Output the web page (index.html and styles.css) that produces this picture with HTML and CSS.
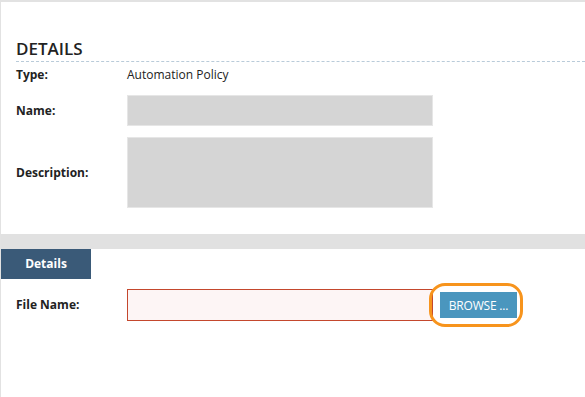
FILE: index.html
```html
<!DOCTYPE html>
<html lang="en">
<head>
    <meta charset="UTF-8">
    <meta name="viewport" content="width=device-width, initial-scale=1.0">
    <title>Automation Policy Details</title>
    <link rel="stylesheet" href="styles.css">
</head>
<body>

    <div class="page">
        <section class="panel">
            <h2 class="panel-title">DETAILS</h2>
            <div class="fields">
                <div class="field-row">
                    <label>Type:</label>
                    <span class="field-value">Automation Policy</span>
                </div>
                <div class="field-row">
                    <label for="policy-name">Name:</label>
                    <input type="text" id="policy-name" class="field-input">
                </div>
                <div class="field-row">
                    <label for="policy-description">Description:</label>
                    <textarea id="policy-description" class="field-input field-textarea"></textarea>
                </div>
            </div>
        </section>

        <div class="divider"></div>

        <div class="tabs">
            <a class="tab active">Details</a>
        </div>

        <section class="panel upload-panel">
            <div class="field-row">
                <label for="file-name">File Name:</label>
                <input type="text" id="file-name" class="field-input file-input">
                <button class="browse-btn">BROWSE ...</button>
            </div>
        </section>
    </div>

</body>
</html>
```

FILE: styles.css
```css
body {
    font-family: "Open Sans", Arial, sans-serif;
    font-size: 12px;
    color: #222;
    background-color: #fff;
    margin: 0;
}
.page {
    min-height: 395px;
    border-top: 2px solid #e2e2e2;
    border-left: 1px solid #e2e2e2;
}
.panel {
    padding: 37px 0 26px 15px;
}
.panel-title {
    margin: 0;
    font-size: 17px;
    line-height: 20px;
    font-weight: 600;
    color: #222;
    padding-bottom: 2px;
    border-bottom: 1px dashed #b9cbd9;
}
.fields {
    display: flex;
    flex-direction: column;
    gap: 11px;
    padding-top: 4px;
}
.field-row {
    display: flex;
    align-items: center;
}
.field-row label {
    width: 111px;
    flex-shrink: 0;
    font-weight: 700;
    line-height: 18px;
}
.field-value {
    line-height: 18px;
}
.field-input {
    width: 306px;
    height: 31px;
    margin: 0;
    padding: 4px 8px;
    box-sizing: border-box;
    border: 1px solid #e6e6e6;
    background-color: #d5d5d5;
    font-family: inherit;
    font-size: 12px;
}
.field-textarea {
    height: 71px;
    resize: none;
}
.divider {
    height: 15px;
    background-color: #e1e1e1;
}
.tabs {
    display: flex;
}
.tab {
    width: 90px;
    height: 30px;
    line-height: 30px;
    text-align: center;
    background-color: #3a5a78;
    color: white;
    font-weight: 700;
}
.upload-panel {
    padding-top: 10px;
}
.file-input {
    height: 32px;
    border-color: #c4472d;
    background-color: #fdf5f5;
}
.browse-btn {
    position: relative;
    margin-left: 7px;
    width: 77px;
    height: 26px;
    padding: 0;
    border: none;
    background-color: #4a96be;
    color: white;
    font-family: inherit;
    font-size: 12px;
    letter-spacing: -0.2px;
    cursor: pointer;
}
/* highlight ring round the button */
.browse-btn::after {
    content: "";
    position: absolute;
    top: -9px;
    bottom: -9px;
    left: -11px;
    right: -6px;
    border: 3px solid #f7941d;
    border-radius: 16px;
}
```
